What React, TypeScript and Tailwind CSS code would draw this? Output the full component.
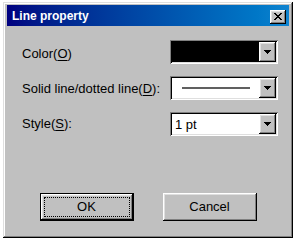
import React from "react";

const raised =
  "shadow-[inset_-1px_-1px_#000,inset_1px_1px_#fff,inset_-2px_-2px_#808080,inset_2px_2px_#dfdfdf]";
const sunken =
  "shadow-[inset_1px_1px_#808080,inset_-1px_-1px_#fff,inset_2px_2px_#000,inset_-2px_-2px_#dfdfdf]";

function Arrow() {
  return (
    <svg width="7" height="4" viewBox="0 0 7 4" shapeRendering="crispEdges">
      <path d="M0 0h7v1H0zM1 1h5v1H1zM2 2h3v1H2zM3 3h1v1H3z" fill="#000" />
    </svg>
  );
}

function DropButton() {
  return (
    <div className={`w-[17px] h-full bg-[#c0c0c0] flex items-center justify-center ${raised}`}>
      <Arrow />
    </div>
  );
}

function Combo({ children, dark }: { children?: React.ReactNode; dark?: boolean }) {
  return (
    <div className={`w-[108px] h-[24px] p-[2px] flex ${sunken} ${dark ? "bg-black" : "bg-white"}`}>
      <div className="flex-1 flex items-center min-w-0">{children}</div>
      <DropButton />
    </div>
  );
}

function U({ children }: { children: React.ReactNode }) {
  return <span className="underline underline-offset-2">{children}</span>;
}

export default function App() {
  return (
    <div className="w-[296px] h-[239px] bg-white pt-[2px] pl-[3px] font-['Liberation_Sans',Arial,sans-serif] text-black">
      <div
        className={`w-[290px] h-[236px] bg-[#c0c0c0] p-[2px] flex flex-col shadow-[inset_-1px_-1px_#000,inset_1px_1px_#dfdfdf,inset_-2px_-2px_#808080,inset_2px_2px_#fff]`}
      >
        <div className="px-[2px] pt-[1px]">
          <div className="h-[21px] bg-linear-to-r from-[#000080] to-[#1084d0] flex items-center justify-between pl-[5px] pr-[3px]">
            <span className="text-white font-bold text-[12px] leading-none">Line property</span>
            <div className={`w-[16px] h-[14px] mt-[2px] bg-[#c0c0c0] flex items-center justify-center ${raised}`}>
              <svg width="8" height="7" viewBox="0 0 8 7" shapeRendering="crispEdges">
                <path
                  d="M0 0h2v1H0zM6 0h2v1H6zM1 1h2v1H1zM5 1h2v1H5zM2 2h4v1H2zM3 3h2v1H3zM2 4h4v1H2zM1 5h2v1H1zM5 5h2v1H5zM0 6h2v1H0zM6 6h2v1H6z"
                  fill="#000"
                />
              </svg>
            </div>
          </div>
        </div>

        <div className="pl-[17px] mt-[14px] flex flex-col gap-[12px] text-[13px]">
          <div className="grid grid-cols-[148px_108px] items-center">
            <span className="pt-[3px]">
              Color(<U>O</U>)
            </span>
            <Combo dark />
          </div>
          <div className="grid grid-cols-[148px_108px] items-center">
            <span className="pt-[2px] whitespace-nowrap">
              Solid line/dotted line(<U>D</U>):
            </span>
            <Combo>
              <div className="ml-[10px] w-[68px] h-[2px] bg-[#606060]" />
            </Combo>
          </div>
          <div className="grid grid-cols-[148px_108px] items-center">
            <span>
              Style(<U>S</U>):
            </span>
            <Combo>
              <span className="pl-[3px] leading-none">1 pt</span>
            </Combo>
          </div>
        </div>

        <div className="mt-[57px] flex justify-center gap-[29px] text-[13px]">
          <button
            className={`w-[94px] h-[28px] bg-[#c0c0c0] border border-black ${raised} outline-1 outline-dotted outline-black outline-offset-[-5px] flex items-center justify-center`}
          >
            OK
          </button>
          <button
            className={`w-[94px] h-[28px] bg-[#c0c0c0] ${raised} flex items-center justify-center`}
          >
            Cancel
          </button>
        </div>
      </div>
    </div>
  );
}
